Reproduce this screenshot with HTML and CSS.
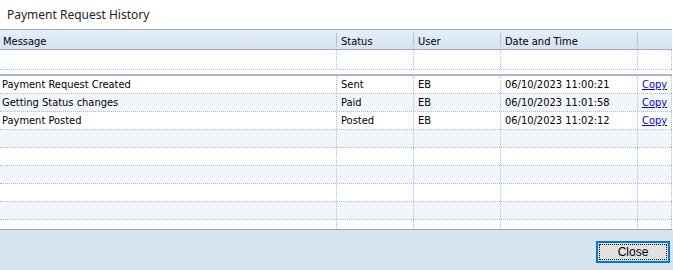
FILE: index.html
```html
<!DOCTYPE html>
<html>
<head>
<meta charset="utf-8">
<link rel="stylesheet" href="styles.css">
</head>
<body>
<div class="dialog">
  <div class="title">Payment Request History</div>
  <div class="grid">
    <div class="row head">
      <div class="cell">Message</div>
      <div class="cell">Status</div>
      <div class="cell">User</div>
      <div class="cell">Date and Time</div>
      <div class="cell last"></div>
    </div>
    <div class="row filter">
      <div class="cell"></div><div class="cell"></div><div class="cell"></div><div class="cell"></div><div class="cell last"></div>
    </div>
    <div class="sep"></div>
    <div class="body">
      <div class="row data">
        <div class="cell">Payment Request Created</div>
        <div class="cell">Sent</div>
        <div class="cell">EB</div>
        <div class="cell">06/10/2023 11:00:21</div>
        <div class="cell last"><a class="link" href="#">Copy</a></div>
      </div>
      <div class="row data alt">
        <div class="cell">Getting Status changes</div>
        <div class="cell">Paid</div>
        <div class="cell">EB</div>
        <div class="cell">06/10/2023 11:01:58</div>
        <div class="cell last"><a class="link" href="#">Copy</a></div>
      </div>
      <div class="row data">
        <div class="cell">Payment Posted</div>
        <div class="cell">Posted</div>
        <div class="cell">EB</div>
        <div class="cell">06/10/2023 11:02:12</div>
        <div class="cell last"><a class="link" href="#">Copy</a></div>
      </div>
      <div class="row data alt"><div class="cell"></div><div class="cell"></div><div class="cell"></div><div class="cell"></div><div class="cell last"></div></div>
      <div class="row data"><div class="cell"></div><div class="cell"></div><div class="cell"></div><div class="cell"></div><div class="cell last"></div></div>
      <div class="row data alt"><div class="cell"></div><div class="cell"></div><div class="cell"></div><div class="cell"></div><div class="cell last"></div></div>
      <div class="row data"><div class="cell"></div><div class="cell"></div><div class="cell"></div><div class="cell"></div><div class="cell last"></div></div>
      <div class="row data alt"><div class="cell"></div><div class="cell"></div><div class="cell"></div><div class="cell"></div><div class="cell last"></div></div>
      <div class="row data tail"><div class="cell"></div><div class="cell"></div><div class="cell"></div><div class="cell"></div><div class="cell last"></div></div>
    </div>
  </div>
  <div class="footer">
    <button class="btn"><span class="btn-focus">Close</span></button>
  </div>
</div>
</body>
</html>
```

FILE: styles.css
```css
html, body {
  margin: 0;
  padding: 0;
  background: #ffffff;
}
.dialog {
  width: 673px;
  height: 270px;
  display: flex;
  flex-direction: column;
  font-family: "DejaVu Sans Condensed", "DejaVu Sans", sans-serif;
  font-stretch: condensed;
  font-size: 11px;
  color: #000;
}
.title {
  height: 29px;
  line-height: 29px;
  padding-left: 7px;
  font-family: "Noto Sans", "Open Sans", sans-serif;
  font-stretch: normal;
  font-size: 12px;
  color: #1e1e1e;
}
.grid {
  width: 672px;
  flex: none;
  border-bottom: 1px solid #97a5bd;
}
.row {
  display: grid;
  grid-template-columns: 337px 77px 87px 137px 34px;
}
.cell {
  padding-left: 4px;
  white-space: nowrap;
  overflow: hidden;
}
.cell:first-child {
  padding-left: 2px;
}
.head {
  height: 19px;
  border-top: 1px solid #9dadc4;
  border-bottom: 1px solid #9dadc4;
  background: linear-gradient(#e6eef8, #d6e3f3);
}
.head .cell {
  line-height: 19px;
  padding-top: 2px;
  height: 17px;
  background: linear-gradient(#b4c2d4, #b4c2d4) right 0 top 3px / 1px 14px no-repeat;
}
.head .cell:first-child { padding-left: 3px; }
.head .cell.last {
  background: none;
}
.filter {
  height: 19px;
  border-bottom: 1px dotted #a9bcd6;
}
.filter .cell,
.data .cell {
  border-right: 1px dotted #a9bcd6;
}
.sep {
  height: 4px;
  border-bottom: 2px solid #a7b7cc;
}
.data {
  height: 17px;
  border-bottom: 1px dotted #a9bcd6;
}
.data .cell {
  line-height: 17px;
}
.data.alt {
  background: #f2f6fb;
}
.data.tail {
  height: 9px;
  border-bottom: none;
}
.link {
  color: #0000ee;
  text-decoration: underline;
}
.footer {
  flex: 1;
  background: #d9e4f2;
  display: flex;
  justify-content: flex-end;
  align-items: flex-start;
  padding: 11px 3px 0 0;
}
.btn {
  width: 74px;
  height: 22px;
  margin: 0;
  padding: 1px;
  border: 2px solid #0078d7;
  background: #e1e1e1;
  display: flex;
}
.btn-focus {
  flex: 1;
  border: 1px dotted #000;
  font-family: "Liberation Sans", Arial, sans-serif;
  font-size: 12px;
  line-height: 14px;
  color: #000;
  text-align: center;
}
```
